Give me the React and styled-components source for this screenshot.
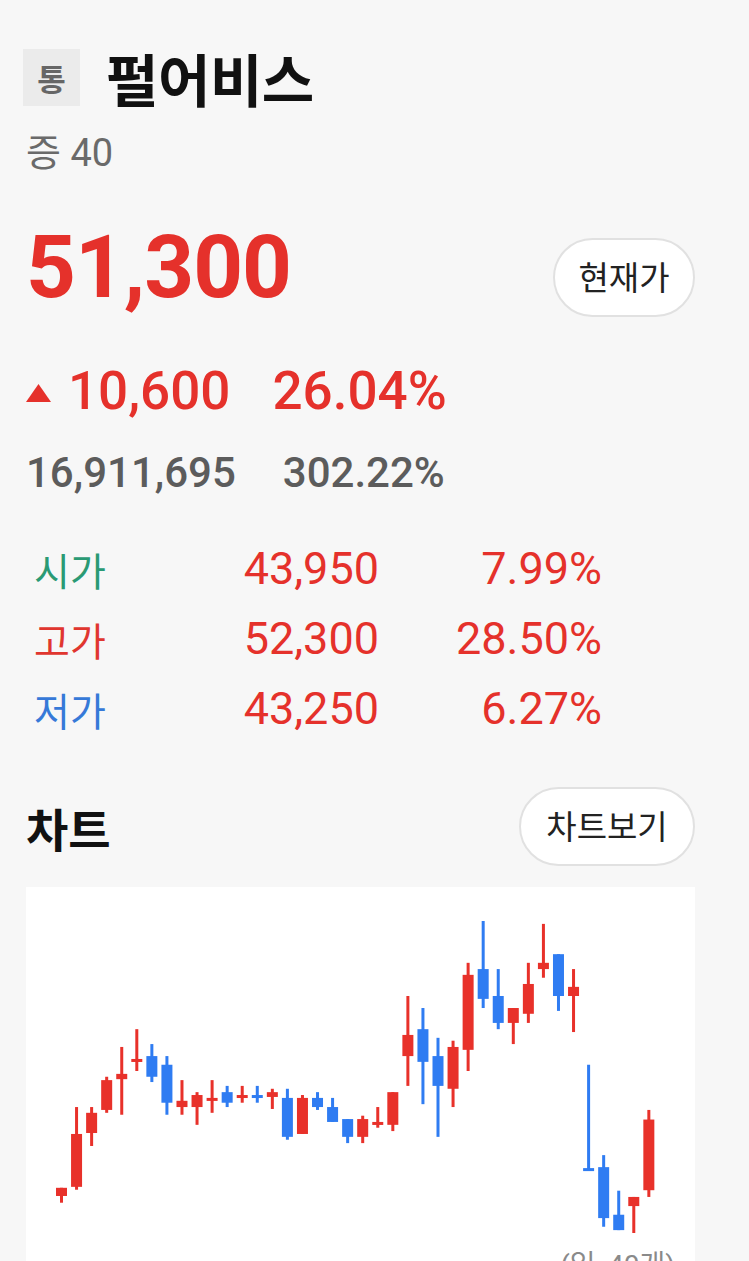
import React from "react";
import styled, { createGlobalStyle } from "styled-components";

const GlobalStyle = createGlobalStyle`
  html, body {
    margin: 0;
    padding: 0;
    background: #f7f7f7;
  }
  body {
    font-family: Roboto, "Noto Sans CJK KR", sans-serif;
    -webkit-font-smoothing: antialiased;
  }
`;

const RED = "#e5312b";
const BLUE = "#2f7cf2";

const Page = styled.main`
  padding: 49px 54px 0 26px;
  background: #f7f7f7;
  min-height: 1261px;
  box-sizing: border-box;
`;

const Header = styled.div`
  display: flex;
  align-items: center;
  height: 57px;
`;

const MarketBadge = styled.span`
  display: flex;
  align-items: center;
  justify-content: center;
  width: 57px;
  height: 57px;
  margin-left: -3px;
  background: #ebebeb;
  color: #666;
  font-family: "Noto Sans CJK KR", sans-serif;
  font-weight: 700;
  font-size: 31px;
  line-height: 1;
`;

const StockName = styled.h1`
  margin: 0 0 0 26px;
  font-family: "Noto Sans CJK KR", sans-serif;
  font-weight: 700;
  font-size: 57px;
  line-height: 57px;
  letter-spacing: -0.5px;
  color: #111;
`;

const SubInfo = styled.div`
  margin-top: 27px;
  font-size: 38px;
  line-height: 40px;
  color: #6a6a6a;
`;

const PriceRow = styled.div`
  display: flex;
  justify-content: space-between;
  align-items: flex-start;
  margin-top: 50px;
`;

const Price = styled.div`
  font-weight: 700;
  font-size: 87px;
  line-height: 88px;
  color: ${RED};
  letter-spacing: -1px;
`;

const PillButton = styled.button`
  box-sizing: border-box;
  width: ${(p) => p.$width}px;
  height: 79px;
  margin-top: ${(p) => p.$offset || 0}px;
  border: 2px solid #e1e1e1;
  border-radius: 40px;
  background: #fff;
  color: #222;
  font-family: "Noto Sans CJK KR", sans-serif;
  font-size: 33px;
  line-height: 1;
  padding: 0 0 3px;
  cursor: pointer;
`;

const ChangeRow = styled.div`
  display: flex;
  align-items: baseline;
  margin-top: 46px;
  font-weight: 500;
  font-size: 53px;
  line-height: 56px;
  color: ${RED};
`;

const UpMark = styled.svg`
  width: 25px;
  height: 18px;
  margin-right: 17px;
  align-self: baseline;
  position: relative;
  top: -7px;
`;

const Figure = styled.span`
  margin-left: ${(p) => p.$gap || 0}px;
`;

const VolumeRow = styled.div`
  display: flex;
  align-items: baseline;
  margin-top: 31px;
  font-weight: 500;
  font-size: 42px;
  line-height: 46px;
  color: #5c5c5c;
`;

const StatsGrid = styled.div`
  display: grid;
  grid-template-columns: 130px 215px 223px;
  margin-top: 38px;
  padding-left: 8px;
`;

const StatLabel = styled.div`
  font-family: "Noto Sans CJK KR", sans-serif;
  font-size: 39px;
  line-height: 70px;
  color: ${(p) => p.$color};
`;

const StatValue = styled.div`
  text-align: right;
  font-size: 45px;
  line-height: 70px;
  color: ${RED};
`;

const SectionHeader = styled.div`
  display: flex;
  justify-content: space-between;
  align-items: center;
  margin-top: 43px;
`;

const SectionTitle = styled.h2`
  margin: 0;
  font-family: "Noto Sans CJK KR", sans-serif;
  font-weight: 700;
  font-size: 46px;
  line-height: 48px;
  color: #111;
`;

const ChartCard = styled.section`
  margin-top: 21px;
  background: #fff;
  height: 420px;
  display: flex;
  flex-direction: column;
`;

const ChartSvg = styled.svg`
  display: block;
  width: 100%;
  height: 360px;
`;

const ChartNote = styled.div`
  margin-top: 3px;
  padding-right: 20px;
  text-align: right;
  font-size: 28px;
  line-height: 32px;
  color: #8a8a8a;
`;

// daily candles: [open, high, low, close]
const candles = [
  [43350, 44200, 42650, 44200],
  [44300, 52600, 44000, 49800],
  [49900, 52600, 48550, 52000],
  [52300, 55750, 52000, 55400],
  [55500, 58850, 51800, 56050],
  [57300, 60700, 56350, 57600],
  [57900, 59150, 55200, 55750],
  [57000, 57900, 51800, 53050],
  [52600, 55400, 51800, 53250],
  [52600, 54150, 50750, 53850],
  [53250, 55400, 52000, 53550],
  [54150, 54800, 52600, 53050],
  [53550, 54800, 53050, 53850],
  [53850, 54800, 53050, 53550],
  [53650, 54500, 52400, 54150],
  [53550, 54500, 49200, 49500],
  [49800, 53850, 49800, 53550],
  [53550, 54150, 52300, 52600],
  [52600, 53550, 51050, 51050],
  [51350, 51350, 48850, 49500],
  [49500, 51700, 48850, 51350],
  [50750, 52600, 50450, 51050],
  [50750, 54150, 50100, 54150],
  [57900, 64150, 54800, 60100],
  [60700, 62900, 52900, 57300],
  [57900, 59800, 49500, 54800],
  [54500, 59500, 52600, 58850],
  [58550, 67600, 56350, 66350],
  [66950, 71950, 62900, 63850],
  [64150, 66950, 60700, 61350],
  [61350, 62900, 59150, 62900],
  [62300, 67600, 61350, 65400],
  [66950, 71650, 66050, 67600],
  [68500, 68500, 62600, 64150],
  [64150, 66950, 60400, 65100],
  [46250, 57000, 45950, 45950],
  [46350, 47600, 40150, 41050],
  [41400, 43900, 39800, 39800],
  [42300, 43250, 39500, 43250],
  [43950, 52300, 43250, 51300],
];

const CHART_W = 669;
const PAD_LEFT = 35.5;
const STEP = 15.06;
const PLOT_TOP = 34;
const PLOT_H = 312;
const BODY_W = 11;
const WICK_W = 3;

function CandleChart({ data }) {
  const maxHigh = Math.max(...data.map((c) => c[1]));
  const minLow = Math.min(...data.map((c) => c[2]));
  const y = (p) => PLOT_TOP + ((maxHigh - p) / (maxHigh - minLow)) * PLOT_H;

  return (
    <ChartSvg viewBox={`0 0 ${CHART_W} 360`} preserveAspectRatio="none">
      {data.map(([o, h, l, c], i) => {
        const cx = PAD_LEFT + STEP * i;
        const up = c >= o;
        const color = up ? "#e8312a" : BLUE;
        const top = y(Math.max(o, c));
        const bottom = y(Math.min(o, c));
        const bodyH = Math.max(bottom - top, 3);
        return (
          <g key={i} fill={color}>
            <rect x={cx - WICK_W / 2} y={y(h)} width={WICK_W} height={y(l) - y(h)} />
            <rect x={cx - BODY_W / 2} y={top} width={BODY_W} height={bodyH} />
          </g>
        );
      })}
    </ChartSvg>
  );
}

const stats = [
  { label: "시가", color: "#2a9a74", price: "43,950", rate: "7.99%" },
  { label: "고가", color: "#e0362f", price: "52,300", rate: "28.50%" },
  { label: "저가", color: "#3679d8", price: "43,250", rate: "6.27%" },
];

export default function App() {
  return (
    <>
      <GlobalStyle />
      <Page>
        <Header>
          <MarketBadge>통</MarketBadge>
          <StockName>펄어비스</StockName>
        </Header>
        <SubInfo>증 40</SubInfo>

        <PriceRow>
          <Price>51,300</Price>
          <PillButton $width={142} $offset={15}>현재가</PillButton>
        </PriceRow>

        <ChangeRow>
          <UpMark viewBox="0 0 25 18">
            <polygon points="12.5,0 25,18 0,18" fill={RED} />
          </UpMark>
          <Figure>10,600</Figure>
          <Figure $gap={42}>26.04%</Figure>
        </ChangeRow>

        <VolumeRow>
          <Figure>16,911,695</Figure>
          <Figure $gap={47}>302.22%</Figure>
        </VolumeRow>

        <StatsGrid>
          {stats.map((s) => (
            <React.Fragment key={s.label}>
              <StatLabel $color={s.color}>{s.label}</StatLabel>
              <StatValue>{s.price}</StatValue>
              <StatValue>{s.rate}</StatValue>
            </React.Fragment>
          ))}
        </StatsGrid>

        <SectionHeader>
          <SectionTitle>차트</SectionTitle>
          <PillButton $width={176}>차트보기</PillButton>
        </SectionHeader>

        <ChartCard>
          <CandleChart data={candles} />
          <ChartNote>(일, 40개)</ChartNote>
        </ChartCard>
      </Page>
    </>
  );
}
